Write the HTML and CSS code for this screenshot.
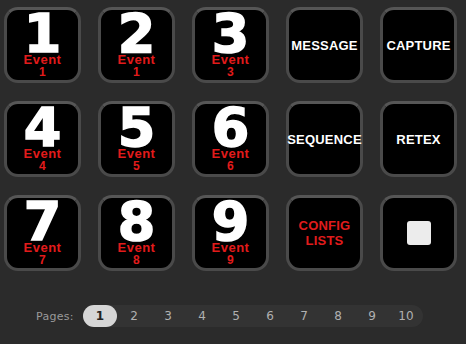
FILE: index.html
```html
<!DOCTYPE html>
<html lang="en">

<head>
    <meta charset="UTF-8">
    <meta name="viewport" content="width=device-width, initial-scale=1.0">
    <title>Event Pad</title>
    <link rel="stylesheet" href="styles.css">
</head>

<body>
    <div class="pad">
        <div class="key"><div class="digit">1</div><div class="event">Event</div><div class="num">1</div></div>
        <div class="key"><div class="digit">2</div><div class="event">Event</div><div class="num">1</div></div>
        <div class="key"><div class="digit">3</div><div class="event">Event</div><div class="num">3</div></div>
        <div class="key label">MESSAGE</div>
        <div class="key label">CAPTURE</div>

        <div class="key"><div class="digit">4</div><div class="event">Event</div><div class="num">4</div></div>
        <div class="key"><div class="digit">5</div><div class="event">Event</div><div class="num">5</div></div>
        <div class="key"><div class="digit">6</div><div class="event">Event</div><div class="num">6</div></div>
        <div class="key label">SEQUENCE</div>
        <div class="key label">RETEX</div>

        <div class="key"><div class="digit">7</div><div class="event">Event</div><div class="num">7</div></div>
        <div class="key"><div class="digit">8</div><div class="event">Event</div><div class="num">8</div></div>
        <div class="key"><div class="digit">9</div><div class="event">Event</div><div class="num">9</div></div>
        <div class="key label red">CONFIG<br>LISTS</div>
        <div class="key label"><span class="stop"></span></div>
    </div>

    <div class="pager">
        <span class="pager-title">Pages:</span>
        <div class="pages">
            <span class="page active">1</span>
            <span class="page">2</span>
            <span class="page">3</span>
            <span class="page">4</span>
            <span class="page">5</span>
            <span class="page">6</span>
            <span class="page">7</span>
            <span class="page">8</span>
            <span class="page">9</span>
            <span class="page">10</span>
        </div>
    </div>
</body>

</html>
```

FILE: styles.css
```css
body {
    margin: 0;
    padding: 0;
    background: #2b2b2b;
    font-family: "Liberation Sans", Arial, sans-serif;
}

.pad {
    display: grid;
    grid-template-columns: repeat(5, 77px);
    grid-auto-rows: 76px;
    column-gap: 17px;
    row-gap: 18px;
    padding: 7px 0 0 4px;
}

.key {
    box-sizing: border-box;
    background: #000;
    border: 3px solid #4a4a4a;
    border-top-color: #565656;
    border-radius: 14px;
    display: flex;
    flex-direction: column;
    align-items: center;
    padding-top: 4px;
    text-align: center;
}

.digit {
    font-family: "DejaVu Sans", sans-serif;
    font-weight: 700;
    font-size: 54px;
    line-height: 39px;
    height: 39px;
    color: #fff;
    -webkit-text-stroke: 1.6px #fff;
}

.event,
.num {
    color: #e21b1b;
    font-weight: 700;
    font-size: 13px;
    line-height: 13px;
    letter-spacing: 0.5px;
}

.num {
    font-size: 12px;
    line-height: 12px;
}

.label {
    justify-content: center;
    padding-top: 0;
    color: #fff;
    font-weight: 700;
    font-size: 13px;
    line-height: 15px;
    letter-spacing: 0.2px;
    white-space: nowrap;
}

.red {
    color: #e01c1c;
}

.stop {
    width: 24px;
    height: 24px;
    background: #ececec;
    border-radius: 3px;
}

.pager {
    display: flex;
    align-items: center;
    margin-top: 34px;
    padding-left: 36px;
}

.pager-title {
    font-family: "DejaVu Sans", sans-serif;
    font-size: 11px;
    letter-spacing: 0.3px;
    color: #9a9a9a;
    width: 47px;
}

.pages {
    display: flex;
    background: #333;
    border-radius: 11px;
}

.page {
    width: 34px;
    height: 22px;
    line-height: 22px;
    text-align: center;
    font-family: "DejaVu Sans", sans-serif;
    font-size: 12px;
    color: #b0b0b0;
}

.active {
    background: #d6d6d6;
    color: #222;
    font-weight: 700;
    border-radius: 11px;
}
```
